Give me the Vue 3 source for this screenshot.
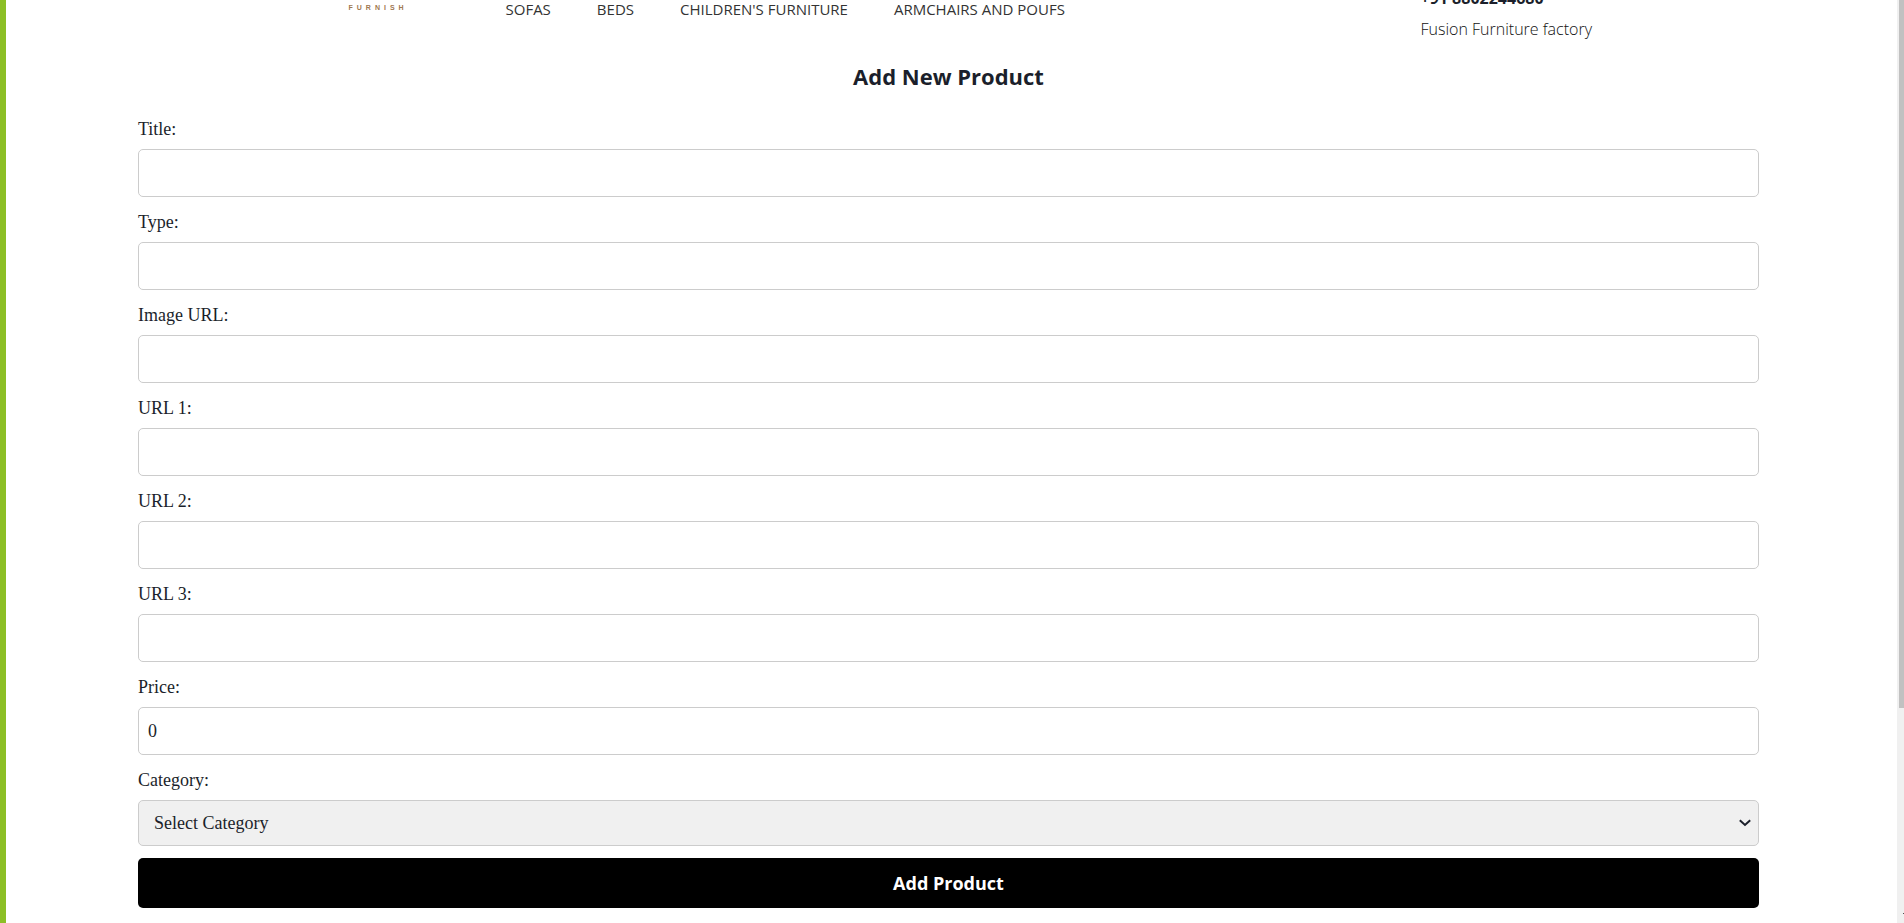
<script setup>
import { reactive } from 'vue'

const links = ['SOFAS', 'BEDS', "CHILDREN'S FURNITURE", 'ARMCHAIRS AND POUFS']

const fields = [
  { key: 'title', label: 'Title:', type: 'text' },
  { key: 'type', label: 'Type:', type: 'text' },
  { key: 'image', label: 'Image URL:', type: 'text' },
  { key: 'url1', label: 'URL 1:', type: 'text' },
  { key: 'url2', label: 'URL 2:', type: 'text' },
  { key: 'url3', label: 'URL 3:', type: 'text' },
  { key: 'price', label: 'Price:', type: 'text' }
]

const product = reactive({
  title: '', type: '', image: '', url1: '', url2: '', url3: '', price: '0', category: ''
})
</script>

<template>
  <div class="page">
    <div class="accent"></div>
    <header class="header">
      <div class="bar">
        <div class="brand">FURNISH</div>
        <nav class="nav">
          <a v-for="link in links" :key="link" href="#">{{ link }}</a>
        </nav>
        <div class="contact">
          <strong>+91 8802244680</strong>
          <span>Fusion Furniture factory</span>
        </div>
      </div>
    </header>

    <main class="content">
      <h1>Add New Product</h1>
      <form @submit.prevent>
        <div v-for="f in fields" :key="f.key" class="field">
          <label :for="f.key">{{ f.label }}</label>
          <input :id="f.key" v-model="product[f.key]" :type="f.type" />
        </div>
        <div class="field">
          <label for="category">Category:</label>
          <div class="select">
            <select id="category" v-model="product.category">
              <option value="">Select Category</option>
            </select>
            <svg class="chevron" width="14" height="10" viewBox="0 0 14 10" aria-hidden="true">
              <path d="M1.8 2.2 L7 7 L12.2 2.2" fill="none" stroke="#1b1f2b" stroke-width="2" />
            </svg>
          </div>
        </div>
        <button type="submit">Add Product</button>
      </form>
    </main>

    <div class="scrollbar">
      <div class="thumb"></div>
      <div class="arrow"></div>
    </div>
  </div>
</template>

<style>
html,
body {
  overflow: hidden;
  background: #fff;
}
</style>

<style scoped>
.page {
  min-height: 100vh;
  padding-right: 7px;
  box-sizing: border-box;
  color: #212529;
  font-family: "Segoe UI", "Open Sans", "Noto Sans", sans-serif;
}
.accent {
  position: fixed;
  top: 0;
  bottom: 0;
  left: 0;
  width: 6px;
  background: #8cbf26;
}
.header {
  height: 43px;
  overflow: hidden;
}
.bar {
  display: flex;
  align-items: flex-end;
  height: 43px;
  max-width: 1320px;
  margin: 0 auto;
  padding: 0 15px 0 60px;
  box-sizing: border-box;
}
.brand {
  width: 157px;
  padding-bottom: 31px;
  font: 700 7px/8px "Liberation Sans", sans-serif;
  letter-spacing: 4px;
  color: #a07850;
}
.nav {
  display: flex;
  flex: 1;
  gap: 46px;
  padding-bottom: 22px;
}
.nav a {
  color: #333;
  font-size: 15px;
  font-weight: 400;
  line-height: 24px;
  text-decoration: none;
  white-space: nowrap;
}
.contact {
  display: flex;
  flex-direction: column;
  width: 173px;
  gap: 4px;
  white-space: nowrap;
}
.contact strong {
  font-size: 16px;
  line-height: 27px;
  color: #1b1f2b;
}
.contact span {
  font-size: 16px;
  font-weight: 300;
  line-height: 27px;
  color: #111;
}
.content {
  padding: 15px 138px 0;
}
h1 {
  margin: 0 0 22px;
  font-size: 22px;
  line-height: 36px;
  font-weight: 700;
  text-align: center;
  color: #1b1f2b;
}
.field {
  display: flex;
  flex-direction: column;
  gap: 6px;
  margin-bottom: 12px;
}
label,
input,
select {
  font-family: "Liberation Serif", serif;
  font-size: 18px;
  line-height: 27px;
  color: #1b1f2b;
}
label {
  align-self: flex-start;
}
input,
select {
  display: block;
  width: 100%;
  height: 48px;
  padding: 0 9px;
  box-sizing: border-box;
  border: 1px solid #ccc;
  border-radius: 5px;
  background: #fff;
}
.select {
  position: relative;
}
select {
  height: 46px;
  padding: 0 30px 0 15px;
  background: #f0f0f0;
  appearance: none;
}
.chevron {
  position: absolute;
  top: 18px;
  right: 7px;
  pointer-events: none;
}
button {
  display: block;
  width: 100%;
  height: 50px;
  padding: 0;
  border: 0;
  border-radius: 5px;
  background: #000;
  color: #fff;
  font: 700 18px/24px "Segoe UI", "Open Sans", "Noto Sans", sans-serif;
}
.scrollbar {
  position: fixed;
  top: 0;
  right: 0;
  bottom: 0;
  width: 7px;
  background: #f0f0f0;
}
.thumb {
  width: 5px;
  height: 708px;
  margin-left: auto;
  background: #c1c1c1;
}
.arrow {
  position: absolute;
  right: 0;
  bottom: 9px;
  width: 1px;
  height: 1px;
  background: #505050;
}
</style>
